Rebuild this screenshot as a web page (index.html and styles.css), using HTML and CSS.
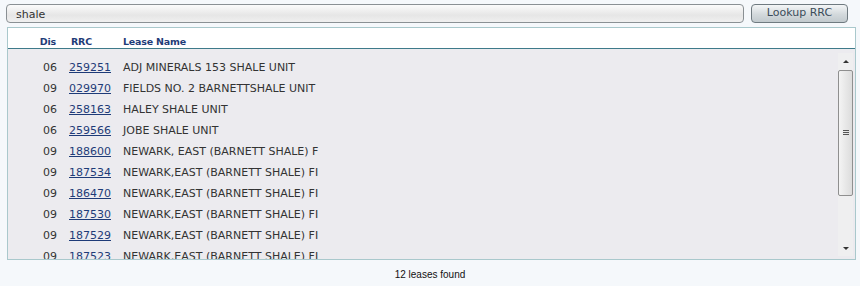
FILE: index.html
```html
<!DOCTYPE html>
<html>
<head>
<meta charset="utf-8">
<link rel="stylesheet" href="styles.css">
</head>
<body>
<div class="page">
  <div class="search">
    <div class="input">shale</div>
    <div class="btn">Lookup RRC</div>
  </div>
  <div class="panel">
    <div class="head">
      <span class="c-dis">Dis</span>
      <span class="c-rrc">RRC</span>
      <span class="c-name">Lease Name</span>
    </div>
    <div class="body">
      <div class="rows">
        <div class="row"><span class="c-dis">06</span><span class="c-rrc"><a>259251</a></span><span class="c-name">ADJ MINERALS 153 SHALE UNIT</span></div>
        <div class="row"><span class="c-dis">09</span><span class="c-rrc"><a>029970</a></span><span class="c-name">FIELDS NO. 2 BARNETTSHALE UNIT</span></div>
        <div class="row"><span class="c-dis">06</span><span class="c-rrc"><a>258163</a></span><span class="c-name">HALEY SHALE UNIT</span></div>
        <div class="row"><span class="c-dis">06</span><span class="c-rrc"><a>259566</a></span><span class="c-name">JOBE SHALE UNIT</span></div>
        <div class="row"><span class="c-dis">09</span><span class="c-rrc"><a>188600</a></span><span class="c-name">NEWARK, EAST (BARNETT SHALE) F</span></div>
        <div class="row"><span class="c-dis">09</span><span class="c-rrc"><a>187534</a></span><span class="c-name">NEWARK,EAST (BARNETT SHALE) FI</span></div>
        <div class="row"><span class="c-dis">09</span><span class="c-rrc"><a>186470</a></span><span class="c-name">NEWARK,EAST (BARNETT SHALE) FI</span></div>
        <div class="row"><span class="c-dis">09</span><span class="c-rrc"><a>187530</a></span><span class="c-name">NEWARK,EAST (BARNETT SHALE) FI</span></div>
        <div class="row"><span class="c-dis">09</span><span class="c-rrc"><a>187529</a></span><span class="c-name">NEWARK,EAST (BARNETT SHALE) FI</span></div>
        <div class="row"><span class="c-dis">09</span><span class="c-rrc"><a>187523</a></span><span class="c-name">NEWARK,EAST (BARNETT SHALE) FI</span></div>
      </div>
      <div class="scroll">
        <div class="arrow up"></div>
        <div class="track">
          <div class="thumb"><span class="grip"></span></div>
        </div>
        <div class="arrow down"></div>
      </div>
    </div>
  </div>
  <div class="footer">12 leases found</div>
</div>
</body>
</html>
```
FILE: styles.css
```css
html, body {
  margin: 0;
  padding: 0;
  background: #f5f8fb;
}
body {
  font-family: "DejaVu Sans", Verdana, sans-serif;
  font-size: 10px;
  color: #333;
}
.page {
  width: 860px;
  height: 286px;
  padding: 4px 0 0 0;
  box-sizing: border-box;
}
.search {
  display: flex;
  align-items: center;
  margin-left: 6px;
  height: 19px;
}
.input {
  width: 738px;
  height: 19px;
  box-sizing: border-box;
  border: 1px solid #8a9094;
  border-radius: 4px;
  background: linear-gradient(#fbfbfb, #e6e6e6 60%, #f0f0f0);
  padding: 3px 0 0 9px;
  font-size: 11px;
  color: #333;
  line-height: 14px;
}
.btn {
  margin-left: 7px;
  width: 97px;
  height: 19px;
  box-sizing: border-box;
  border: 1px solid #6f7a80;
  border-radius: 4px;
  background: linear-gradient(#f4f6f7, #d3d9dc 55%, #c2cace);
  color: #3b4c5a;
  font-size: 11px;
  text-align: center;
  line-height: 16px;
}
.panel {
  margin: 4px 0 0 7px;
  width: 849px;
  height: 233px;
  box-sizing: border-box;
  border: 1px solid #a9c8cc;
  background: #fff;
  display: flex;
  flex-direction: column;
}
.head {
  height: 21px;
  box-sizing: border-box;
  border-bottom: 1px solid #3e7a8a;
  display: flex;
  align-items: center;
  font-weight: bold;
  color: #1f3c78;
  font-size: 9.5px;
  letter-spacing: -0.2px;
  padding-top: 6px;
  flex: none;
}
.c-dis {
  width: 48px;
  text-align: right;
  flex: none;
}
.c-rrc {
  width: 54px;
  padding-left: 13px;
  flex: none;
}
.head .c-rrc { padding-left: 15px; width: 52px; }
.c-name {
  flex: none;
  white-space: nowrap;
}
.body {
  flex: 1;
  background: #ecebef;
  display: flex;
  overflow: hidden;
}
.rows {
  flex: 1;
  padding-top: 8px;
  overflow: hidden;
  font-size: 11px;
}
.row {
  height: 21px;
  display: flex;
  align-items: center;
  color: #333;
}
.row .c-dis { width: 49px; }
.row .c-rrc { padding-left: 12px; width: 54px; }
.row a {
  color: #1e3b78;
  text-decoration: underline;
}
.scroll {
  width: 15px;
  margin: 4px 2px 3px 0;
  display: flex;
  flex-direction: column;
  background: #efeff0;
}
.arrow {
  height: 17px;
  position: relative;
}
.arrow::after {
  content: "";
  position: absolute;
  left: 5px;
  width: 0;
  height: 0;
  border-left: 3px solid transparent;
  border-right: 3px solid transparent;
}
.arrow.up::after {
  top: 7px;
  border-bottom: 3px solid #333;
}
.arrow.down::after {
  top: 8px;
  border-top: 3px solid #333;
}
.track {
  flex: 1;
}
.thumb {
  height: 126px;
  box-sizing: border-box;
  border: 1px solid #8f8f8f;
  border-radius: 2px;
  background: linear-gradient(90deg, #f4f4f4, #dcdcdc);
  display: flex;
  align-items: center;
  justify-content: center;
}
.grip {
  width: 6px;
  height: 6px;
  background: repeating-linear-gradient(#555 0 1px, transparent 1px 2px);
}
.footer {
  text-align: center;
  margin-top: 9px;
  font-family: "Liberation Sans", Arial, sans-serif;
  font-size: 10px;
  color: #111;
}
```
